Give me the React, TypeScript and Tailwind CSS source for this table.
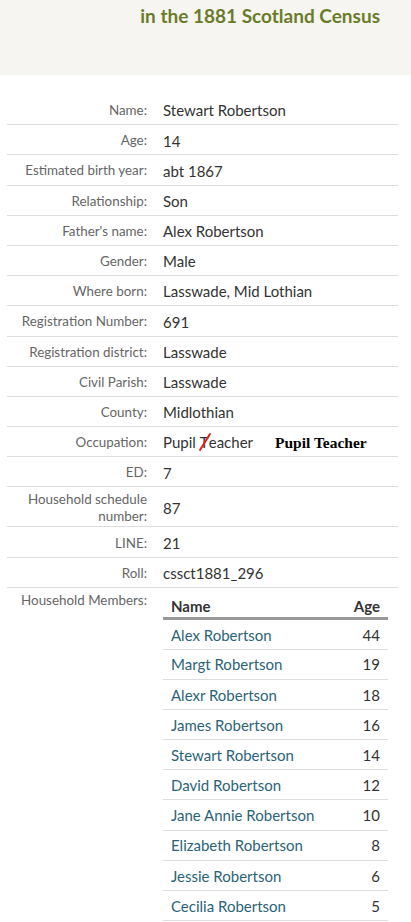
import React from 'react';

const rows: { label: string; value: React.ReactNode; tall?: boolean }[] = [
  { label: 'Name:', value: 'Stewart Robertson' },
  { label: 'Age:', value: '14' },
  { label: 'Estimated birth year:', value: 'abt 1867' },
  { label: 'Relationship:', value: 'Son' },
  { label: "Father's name:", value: 'Alex Robertson' },
  { label: 'Gender:', value: 'Male' },
  { label: 'Where born:', value: 'Lasswade, Mid Lothian' },
  { label: 'Registration Number:', value: '691' },
  { label: 'Registration district:', value: 'Lasswade' },
  { label: 'Civil Parish:', value: 'Lasswade' },
  { label: 'County:', value: 'Midlothian' },
  {
    label: 'Occupation:',
    value: (
      <span className="flex items-center">
        <span>Pupil </span>
        <span className="relative ml-[4px]">
          T
          <svg className="absolute left-[-2px] top-[1px]" width="14" height="20" viewBox="0 0 14 20">
            <path d="M2 18 L12 2" stroke="#e0201b" strokeWidth="2" strokeLinecap="round" />
          </svg>
        </span>
        <span>eacher</span>
        <span className="ml-[22px] font-['Liberation_Serif',serif] font-bold text-[15.5px] text-black">Pupil Teacher</span>
      </span>
    ),
  },
  { label: 'ED:', value: '7' },
  { label: 'Household schedule number:', value: '87', tall: true },
  { label: 'LINE:', value: '21' },
  { label: 'Roll:', value: 'cssct1881_296' },
];

const members: [string, number][] = [
  ['Alex Robertson', 44],
  ['Margt Robertson', 19],
  ['Alexr Robertson', 18],
  ['James Robertson', 16],
  ['Stewart Robertson', 14],
  ['David Robertson', 12],
  ['Jane Annie Robertson', 10],
  ['Elizabeth Robertson', 8],
  ['Jessie Robertson', 6],
  ['Cecilia Robertson', 5],
];

const App: React.FC = () => {
  return (
    <div className="w-[411px] h-[922px] overflow-hidden bg-white font-['Lato',sans-serif]">
      <div className="h-[75px] bg-[#f6f5f1] pr-[31px] pt-[4px] text-right">
        <h2 className="text-[19px] font-bold text-[#6b7c29] leading-[24px]">in the 1881 Scotland Census</h2>
      </div>

      <div className="pt-[20px] pl-[7px] pr-[13px]">
        {rows.map(r => (
          <div key={r.label} className={`flex items-center pt-[2px] border-b border-[#dddddd] ${r.tall ? 'h-[40px]' : 'h-[30.2px]'}`}>
            <div className="w-[140px] text-right text-[13.4px] leading-[17px] text-[#666666]">{r.label}</div>
            <div className="pl-[16px] text-[15px] text-[#333333]">{r.value}</div>
          </div>
        ))}

        <div className="flex pt-[4px]">
          <div className="w-[140px] text-right text-[13.4px] leading-[17px] text-[#666666]">Household Members:</div>
          <div className="ml-[16px] w-[225px]">
            <table className="w-full border-collapse">
              <thead>
                <tr className="border-b-[3px] border-[#999999]">
                  <th className="text-left font-bold text-[15px] text-[#333333] px-[8px] pb-0 pt-[3px]">Name</th>
                  <th className="text-right font-bold text-[15px] text-[#333333] px-[8px] pb-0 pt-[3px]">Age</th>
                </tr>
              </thead>
              <tbody>
                {members.map(([name, age]) => (
                  <tr key={name} className="border-b border-[#dddddd] h-[30.2px]">
                    <td className="px-[8px] pt-[1px] text-[15px] text-[#2b6477]">{name}</td>
                    <td className="px-[8px] pt-[1px] text-right text-[15px] text-[#333333]">{age}</td>
                  </tr>
                ))}
              </tbody>
            </table>
          </div>
        </div>
      </div>
    </div>
  );
};

export default App;
